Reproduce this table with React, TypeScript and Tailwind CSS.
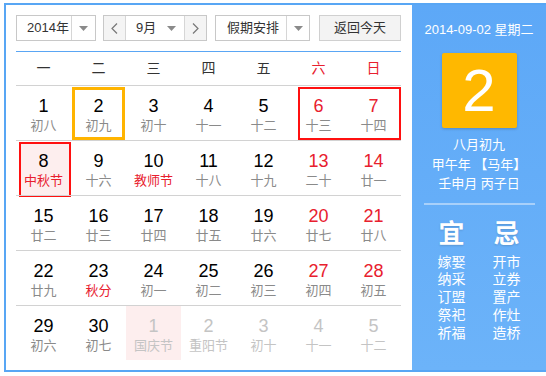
import React from 'react';

type Day = {
  num: number;
  lunar: string;
  red?: boolean;
  fest?: boolean;
  other?: boolean;
  pink?: boolean;
  today?: boolean;
  mark?: boolean;
};

const weeks: Day[][] = [
  [
    { num: 1, lunar: '初八' },
    { num: 2, lunar: '初九', today: true },
    { num: 3, lunar: '初十' },
    { num: 4, lunar: '十一' },
    { num: 5, lunar: '十二' },
    { num: 6, lunar: '十三', red: true },
    { num: 7, lunar: '十四', red: true },
  ],
  [
    { num: 8, lunar: '中秋节', fest: true, pink: true, mark: true },
    { num: 9, lunar: '十六' },
    { num: 10, lunar: '教师节', fest: true },
    { num: 11, lunar: '十八' },
    { num: 12, lunar: '十九' },
    { num: 13, lunar: '二十', red: true },
    { num: 14, lunar: '廿一', red: true },
  ],
  [
    { num: 15, lunar: '廿二' },
    { num: 16, lunar: '廿三' },
    { num: 17, lunar: '廿四' },
    { num: 18, lunar: '廿五' },
    { num: 19, lunar: '廿六' },
    { num: 20, lunar: '廿七', red: true },
    { num: 21, lunar: '廿八', red: true },
  ],
  [
    { num: 22, lunar: '廿九' },
    { num: 23, lunar: '秋分', fest: true },
    { num: 24, lunar: '初一' },
    { num: 25, lunar: '初二' },
    { num: 26, lunar: '初三' },
    { num: 27, lunar: '初四', red: true },
    { num: 28, lunar: '初五', red: true },
  ],
  [
    { num: 29, lunar: '初六' },
    { num: 30, lunar: '初七' },
    { num: 1, lunar: '国庆节', other: true, pink: true },
    { num: 2, lunar: '重阳节', other: true },
    { num: 3, lunar: '初十', other: true },
    { num: 4, lunar: '十一', other: true },
    { num: 5, lunar: '十二', other: true },
  ],
];

const weekNames = ['一', '二', '三', '四', '五', '六', '日'];
const yi = ['嫁娶', '纳采', '订盟', '祭祀', '祈福'];
const ji = ['开市', '立券', '置产', '作灶', '造桥'];

const Caret = () => (
  <svg width="9" height="5" viewBox="0 0 9 5">
    <path d="M0 0 L9 0 L4.5 5 Z" fill="#8a8a8a" />
  </svg>
);

const Chevron = ({ dir }: { dir: 'l' | 'r' }) => (
  <svg width="7" height="11" viewBox="0 0 7 11">
    <polyline
      points={dir === 'l' ? '6,0.5 1,5.5 6,10.5' : '1,0.5 6,5.5 1,10.5'}
      fill="none"
      stroke="#777"
      strokeWidth="1.2"
    />
  </svg>
);

const Cell = ({ d }: { d: Day }) => {
  let numColor = 'text-black';
  if (d.other) numColor = 'text-[#c4c4c4]';
  else if (d.red) numColor = 'text-[#e8202e]';
  let lunarColor = 'text-[#8a8a8a]';
  if (d.other) lunarColor = 'text-[#c4c4c4]';
  else if (d.fest) lunarColor = 'text-[#e8202e]';

  return (
    <div className={`relative flex flex-col items-center pt-[10px] ${d.pink && d.other ? 'bg-[#fdeeee]' : ''}`}>
      {d.mark && (
        <div className="absolute left-[3px] top-[1px] w-[52px] h-[55px] border-2 border-[#ff1010] bg-[#fdeeee]" />
      )}
      {d.today && (
        <div className="absolute left-[1px] top-[1px] w-[53px] h-[53px] border-[3px] border-[#ffb400]" />
      )}
      <span className={`relative text-[18px] leading-[20px] ${numColor}`}>{d.num}</span>
      <span className={`relative text-[13px] leading-[20px] ${lunarColor}`}>{d.lunar}</span>
    </div>
  );
};

export default function App() {
  return (
    <div className="w-[546px] h-[376px] overflow-hidden bg-white font-['Liberation_Sans','Noto_Sans_CJK_SC',sans-serif]">
      <div className="ml-[4px] mt-[3px] w-[542px] h-[369px] flex border-l-2 border-t-2 border-b-2 border-[#58a6f4]">
        {/* left: calendar */}
        <div className="w-[406px] pl-[10px] pr-[11px] pt-[10px]">
          <div className="flex items-center h-[26px] text-[13px] text-[#333]">
            <div className="flex h-[26px] w-[80px] border border-[#c8c8c8] bg-white">
              <div className="flex-1 flex items-center pl-[10px]">2014年</div>
              <div className="w-[24px] flex items-center justify-center border-l border-[#d6d6d6]">
                <Caret />
              </div>
            </div>
            <div className="flex h-[26px] w-[104px] ml-[7px] border border-[#c8c8c8] bg-white">
              <div className="w-[22px] flex items-center justify-center bg-[#f4f4f4] border-r border-[#d6d6d6]">
                <Chevron dir="l" />
              </div>
              <div className="flex-1 flex items-center justify-between pl-[10px] pr-[8px]">
                <span>9月</span>
                <Caret />
              </div>
              <div className="w-[22px] flex items-center justify-center bg-[#f4f4f4] border-l border-[#d6d6d6]">
                <Chevron dir="r" />
              </div>
            </div>
            <div className="flex h-[26px] w-[95px] ml-[8px] border border-[#c8c8c8] bg-white">
              <div className="flex-1 flex items-center pl-[11px]">假期安排</div>
              <div className="w-[23px] flex items-center justify-center border-l border-[#d6d6d6]">
                <Caret />
              </div>
            </div>
            <button className="h-[26px] w-[82px] ml-[9px] border border-[#d0d0d0] bg-[#f3f3f3] text-[13px] text-[#333]">
              返回今天
            </button>
          </div>
          <div className="mt-[10px] h-[1px] bg-[#5aa6f4]" />

          <div className="relative w-[385px]">
            <div className="grid grid-cols-7 h-[33px] items-center text-[14px] text-[#333]">
              {weekNames.map((w, i) => (
                <div key={w} className={`text-center ${i >= 5 ? 'text-[#e8202e]' : ''}`}>
                  {w}
                </div>
              ))}
            </div>
            {weeks.map((row, ri) => (
              <div key={ri} className="relative grid grid-cols-7 h-[55px] border-t border-[#d2d2d2]">
                {row.map((d, ci) => (
                  <Cell key={ci} d={d} />
                ))}
                {ri === 0 && (
                  <div className="absolute left-[282px] top-[1px] w-[103px] h-[53px] border-2 border-[#ff1010] pointer-events-none" />
                )}
              </div>
            ))}
          </div>
        </div>

        {/* right: detail panel */}
        <div className="flex-1 flex flex-col items-center bg-gradient-to-b from-[#5da8f7] to-[#6cb3f9] text-white">
          <div className="mt-[17px] text-[13px] leading-[16px]">2014-09-02 星期二</div>
          <div className="mt-[15px] w-[75px] h-[75px] flex items-center justify-center bg-[#ffb800] rounded-[2px] shadow-[0_1px_3px_rgba(0,0,0,0.2)]">
            <span className="text-[60px] leading-none">2</span>
          </div>
          <div className="mt-[7px] flex flex-col items-center text-[13px] leading-[19.5px]">
            <span>八月初九</span>
            <span>甲午年 【马年】</span>
            <span>壬申月 丙子日</span>
          </div>
          <div className="mt-[9px] w-[111px] h-[2px] bg-[#a8d0fa]" />
          <div className="mt-[15px] flex gap-[21px]">
            {[
              { t: '宜', items: yi },
              { t: '忌', items: ji },
            ].map((col) => (
              <div key={col.t} className="w-[34px] flex flex-col items-center">
                <span className="text-[26px] leading-[28px] font-bold [text-shadow:0_1px_2px_rgba(0,0,0,0.15)]">
                  {col.t}
                </span>
                <div className="mt-[6px] flex flex-col items-center text-[14px] leading-[17.75px]">
                  {col.items.map((it) => (
                    <span key={it}>{it}</span>
                  ))}
                </div>
              </div>
            ))}
          </div>
        </div>
      </div>
    </div>
  );
}
